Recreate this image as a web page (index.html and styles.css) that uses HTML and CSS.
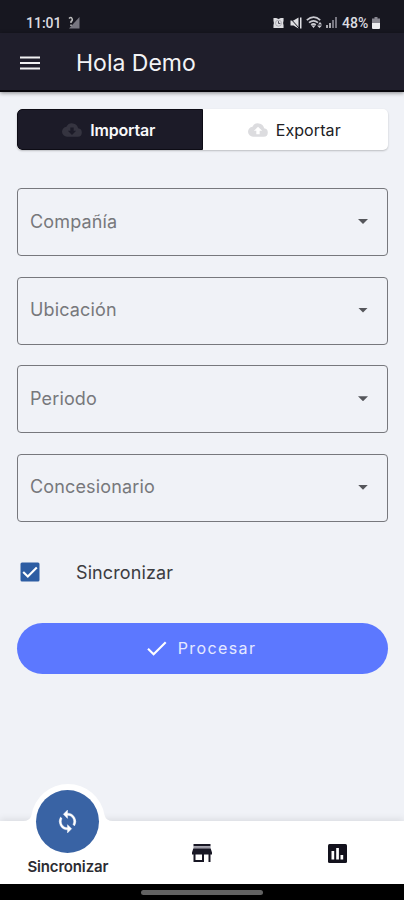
FILE: index.html
```html
<!DOCTYPE html>
<html lang="es">
<head>
<meta charset="utf-8">
<title>Hola Demo</title>
<link rel="stylesheet" href="styles.css">
</head>
<body>
<div class="app">
  <div class="status">
    <span class="time">11:01</span>
    <svg class="nosim" viewBox="0 0 12 13"><path d="M11.500 1v11.500H1z" fill="#777680"/><path d="M1 2.500q2-2 3 0T3 5.500V7M3 8.500v1.500" stroke="#bbb" stroke-width="1.500" fill="none"/></svg>
    <svg class="alarm" viewBox="0 0 12 12"><path d="M.5.500h3L6 1.500 8.500.5h3v3L11 6l.5 2.500v3h-11v-3L1 6 .5 3.500z" fill="#dedee2"/><circle cx="6" cy="6.200" r="3.300" fill="none" stroke="#8b8a94" stroke-width=".6"/><path d="M6 4v2.500h2" fill="none" stroke="#44434e"/></svg>
    <svg class="mute" viewBox="0 0 12 12"><path d="M.5 3.500h3l5-3v11l-5-3h-3zM10 .5h1.500v11H10z" fill="#dedee2"/><path d="M0 1l9 10" stroke="#181820" stroke-width="1"/></svg>
    <svg class="wifi" viewBox="0 0 18 13"><g fill="none" stroke="#c9c9cf" stroke-width="1.700"><path d="M.8 4.200q7-6 13.400 0M3 6.700q4.500-3.800 9 0M5.200 9q2.300-2 4.600 0"/></g><path d="M5.500 9.500h4L7.500 12zM11 9.500h5L13.500 12zM14 6l2 2.500h-4z" fill="#d0d0d6"/></svg>
    <svg class="bars" viewBox="0 0 11 11"><path d="M0 8h2v3H0zM3 6h2v5H3z" fill="#aaaab0"/><path d="M6 3h2v8H6zM9 0h2v11H9z" fill="#777680"/></svg>
    <span class="percent">48%</span>
    <svg class="battery" viewBox="0 0 8 12"><path d="M2.500 0h3v1.500H8V6H0V1.500h2.500z" fill="#898891"/><path d="M0 6h8v5q0 1-1 1H1q-1 0-1-1z" fill="#ededf0"/></svg>
  </div>
  <header class="header">
    <svg class="menu" viewBox="0 0 20 16"><path d="M0 2.500h20M0 8h20M0 13.500h20" stroke="#f1f1f3" stroke-width="2.200"/></svg>
    <h1 class="title">Hola Demo</h1>
  </header>
  <main class="content">
    <div class="tabs">
      <div class="tab active">
        <svg class="cloud" viewBox="0 0 24 24"><path fill="currentColor" fill-rule="evenodd" d="M19.350 10.040A7.490 7.490 0 0 0 5.350 8.040 6 6 0 0 0 6 20h13a5 5 0 0 0 .35-9.960zM17 13l-5 5-5-5h3V9h4v4z"/></svg>
        <span class="tab-text">Importar</span>
      </div>
      <div class="tab">
        <svg class="cloud" viewBox="0 0 24 24"><path fill="currentColor" fill-rule="evenodd" d="M19.350 10.040A7.490 7.490 0 0 0 5.350 8.040 6 6 0 0 0 6 20h13a5 5 0 0 0 .35-9.960zM14 13v4h-4v-4H7l5-5 5 5z"/></svg>
        <span class="tab-text">Exportar</span>
      </div>
    </div>
    <div class="fields">
      <div class="field"><span class="label">Compañía</span><i class="arrow"></i></div>
      <div class="field"><span class="label">Ubicación</span><i class="arrow"></i></div>
      <div class="field"><span class="label">Periodo</span><i class="arrow"></i></div>
      <div class="field"><span class="label">Concesionario</span><i class="arrow"></i></div>
    </div>
    <div class="check-row">
      <svg class="checkbox" viewBox="0 0 20 20"><rect x=".5" y=".5" width="19" height="19" rx="1.500" fill="#2d5da3"/><path d="M3.200 10l4.600 4.600 9-9.200" fill="none" stroke="#fff" stroke-width="2.100"/></svg>
      <span class="check-text">Sincronizar</span>
    </div>
    <div class="button">
      <svg class="tick" viewBox="0 0 20 15"><path d="M1 7.800l5.600 5.500L18.700 1.200" fill="none" stroke="#fff" stroke-width="2.100"/></svg>
      <span class="button-text">Procesar</span>
    </div>
  </main>
  <nav class="nav">
    <div class="nav-item current">
      <div class="bubble">
        <svg class="hump" viewBox="0 0 90 76"><path d="M0 38Q7 38 8.500 32A37 37 0 0 1 81.500 32Q83 38 90 38V76H0z" fill="#fff"/></svg>
        <div class="disc"><svg class="sync" viewBox="0 0 24 24"><path fill="#fff" stroke="#fff" stroke-width=".4" d="M12 4V1L8 5l4 4V6a6 6 0 0 1 5.250 8.800l1.460 1.460A8 8 0 0 0 12 4zm0 14a6 6 0 0 1-5.250-8.800L5.290 7.740A8 8 0 0 0 12 20v3l4-4-4-4z"/></svg></div>
      </div>
      <span class="nav-text">Sincronizar</span>
    </div>
    <div class="nav-item"><svg class="store" viewBox="0 0 20 18"><path d="M1.500 0h17v2.200h-17z" fill="#181724"/><path d="M1.500 2.200h17v2.600h-17z" fill="#9c9aa6"/><path fill="#181724" fill-rule="evenodd" d="M1.300 4.500h17.400L20 8.500v2h-1.500V18h-2v-7.500H12V18H1.500v-7.500H0v-2zM3.500 10.500V16H10v-5.500z"/></svg></div>
    <div class="nav-item"><svg class="chart" viewBox="0 0 19 19"><rect width="19" height="19" rx="1.500" fill="#13121d"/><path d="M3.500 7h2.700v8.500H3.500zM8.200 4h2.700v11.500H8.200zM12.500 11h2.700v4.500h-2.700z" fill="#fff"/></svg></div>
  </nav>
  <div class="gesture"><div class="pill"></div></div>
</div>
</body>
</html>
```
FILE: styles.css
```css
* { box-sizing: border-box; }
body { margin: 0; font-family: Inter, sans-serif; background: #f0f2f7; }
svg { display: block; flex: none; }
span { white-space: nowrap; }
.app { width: 404px; height: 900px; display: flex; flex-direction: column; overflow: hidden; }
.status { height: 33px; flex: none; background: #171720; display: flex; align-items: center; padding: 12px 24px 0 26px; color: #dcdce0; font-family: Roboto, sans-serif; font-size: 14px; line-height: 20px; }
.time { width: 36px; font-weight: 500; letter-spacing: 0; }
.nosim { width: 12px; height: 13px; margin-left: 6px; }
.alarm { width: 11px; height: 12px; margin-left: auto; }
.mute { width: 12px; height: 12px; margin-left: 6px; }
.wifi { width: 18px; height: 13px; margin-left: 4px; }
.bars { width: 11px; height: 11px; margin-left: 2px; }
.percent { width: 28px; margin-left: 5px; font-weight: 500; letter-spacing: 0; }
.battery { width: 8px; height: 12px; margin-left: 2px; }
.header { height: 59px; flex: none; background: #1f1e2b; border-bottom: 2px solid #08080d; box-shadow: 0 1px 4px rgba(0,0,0,.45); display: flex; align-items: center; padding: 3px 20px 0; }
.menu { width: 20px; height: 16px; }
.title { margin: 0 0 0 36px; color: #f3f3f5; font-size: 23px; font-weight: 400; line-height: 28px; }
.content { flex: 1; padding: 17px 16px 0 17px; }
.tabs { height: 41px; display: flex; border-radius: 5px; overflow: hidden; background: #fff; box-shadow: 0 1px 2px rgba(0,0,0,.22); }
.tab { width: 50%; display: flex; align-items: center; justify-content: center; padding-right: 2px; color: #dcdcdf; }
.tab.active { background: #1c1b28; color: #353440; border: 1px solid #0d0c15; border-radius: 5px 0 0 5px; }
.cloud { width: 20px; height: 20px; }
.tab-text { margin-left: 8px; color: #202024; font-size: 16px; line-height: 20px; letter-spacing: .1px; }
.active .tab-text { color: #f8f8fa; font-weight: 600; letter-spacing: -0.200px; }
.fields { margin-top: 38px; display: grid; gap: 20.600px; }
.field { height: 68px; border: 1px solid #77787d; border-radius: 4px; display: flex; align-items: center; justify-content: space-between; padding: 0 19px 1px 12px; }
.label { color: #77787c; font-size: 18px; line-height: 24px; letter-spacing: .15px; }
.arrow { width: 10px; height: 5px; background: #55565b; clip-path: polygon(0 0, 100% 0, 50% 100%); }
.check-row { height: 20px; margin: 40px 0 0 3px; display: flex; align-items: center; }
.checkbox { width: 20px; height: 20px; }
.check-text { margin: 2px 0 0 36px; color: #3c3c41; font-size: 18px; line-height: 24px; letter-spacing: .1px; }
.button { height: 51px; margin-top: 41px; border-radius: 26px; background: #5c78ff; display: flex; align-items: center; justify-content: center; padding-right: 2px; }
.tick { width: 20px; height: 15px; margin-right: 11px; }
.button-text { color: #e5e9ff; font-size: 16px; line-height: 20px; letter-spacing: 1.400px; }
.nav { height: 63px; flex: none; background: #fff; box-shadow: 0 -2px 7px rgba(0,0,0,.09); display: grid; grid-template-columns: repeat(3, 1fr); }
.nav-item { display: flex; align-items: center; justify-content: center; padding: 1px 0 0 1px; }
.current { flex-direction: column; justify-content: flex-start; padding-top: 0; }
.bubble { width: 90px; height: 76px; flex: none; margin-top: -38px; display: grid; place-items: center; }
.hump, .disc { grid-area: 1 / 1; }
.hump { width: 90px; height: 76px; }
.disc { width: 63px; height: 63px; border-radius: 50%; background: #3963a4; display: grid; place-items: center; }
.sync { width: 25px; height: 25px; }
.nav-text { margin-top: -1px; font-size: 15px; line-height: 18px; font-weight: 600; letter-spacing: -0.150px; color: #2c2c32; }
.store { width: 20px; height: 18px; }
.chart { width: 19px; height: 19px; }
.gesture { height: 16px; flex: none; background: #000; display: flex; justify-content: center; padding-top: 6px; }
.pill { width: 122px; height: 5px; border-radius: 3px; background: #626262; }
```
